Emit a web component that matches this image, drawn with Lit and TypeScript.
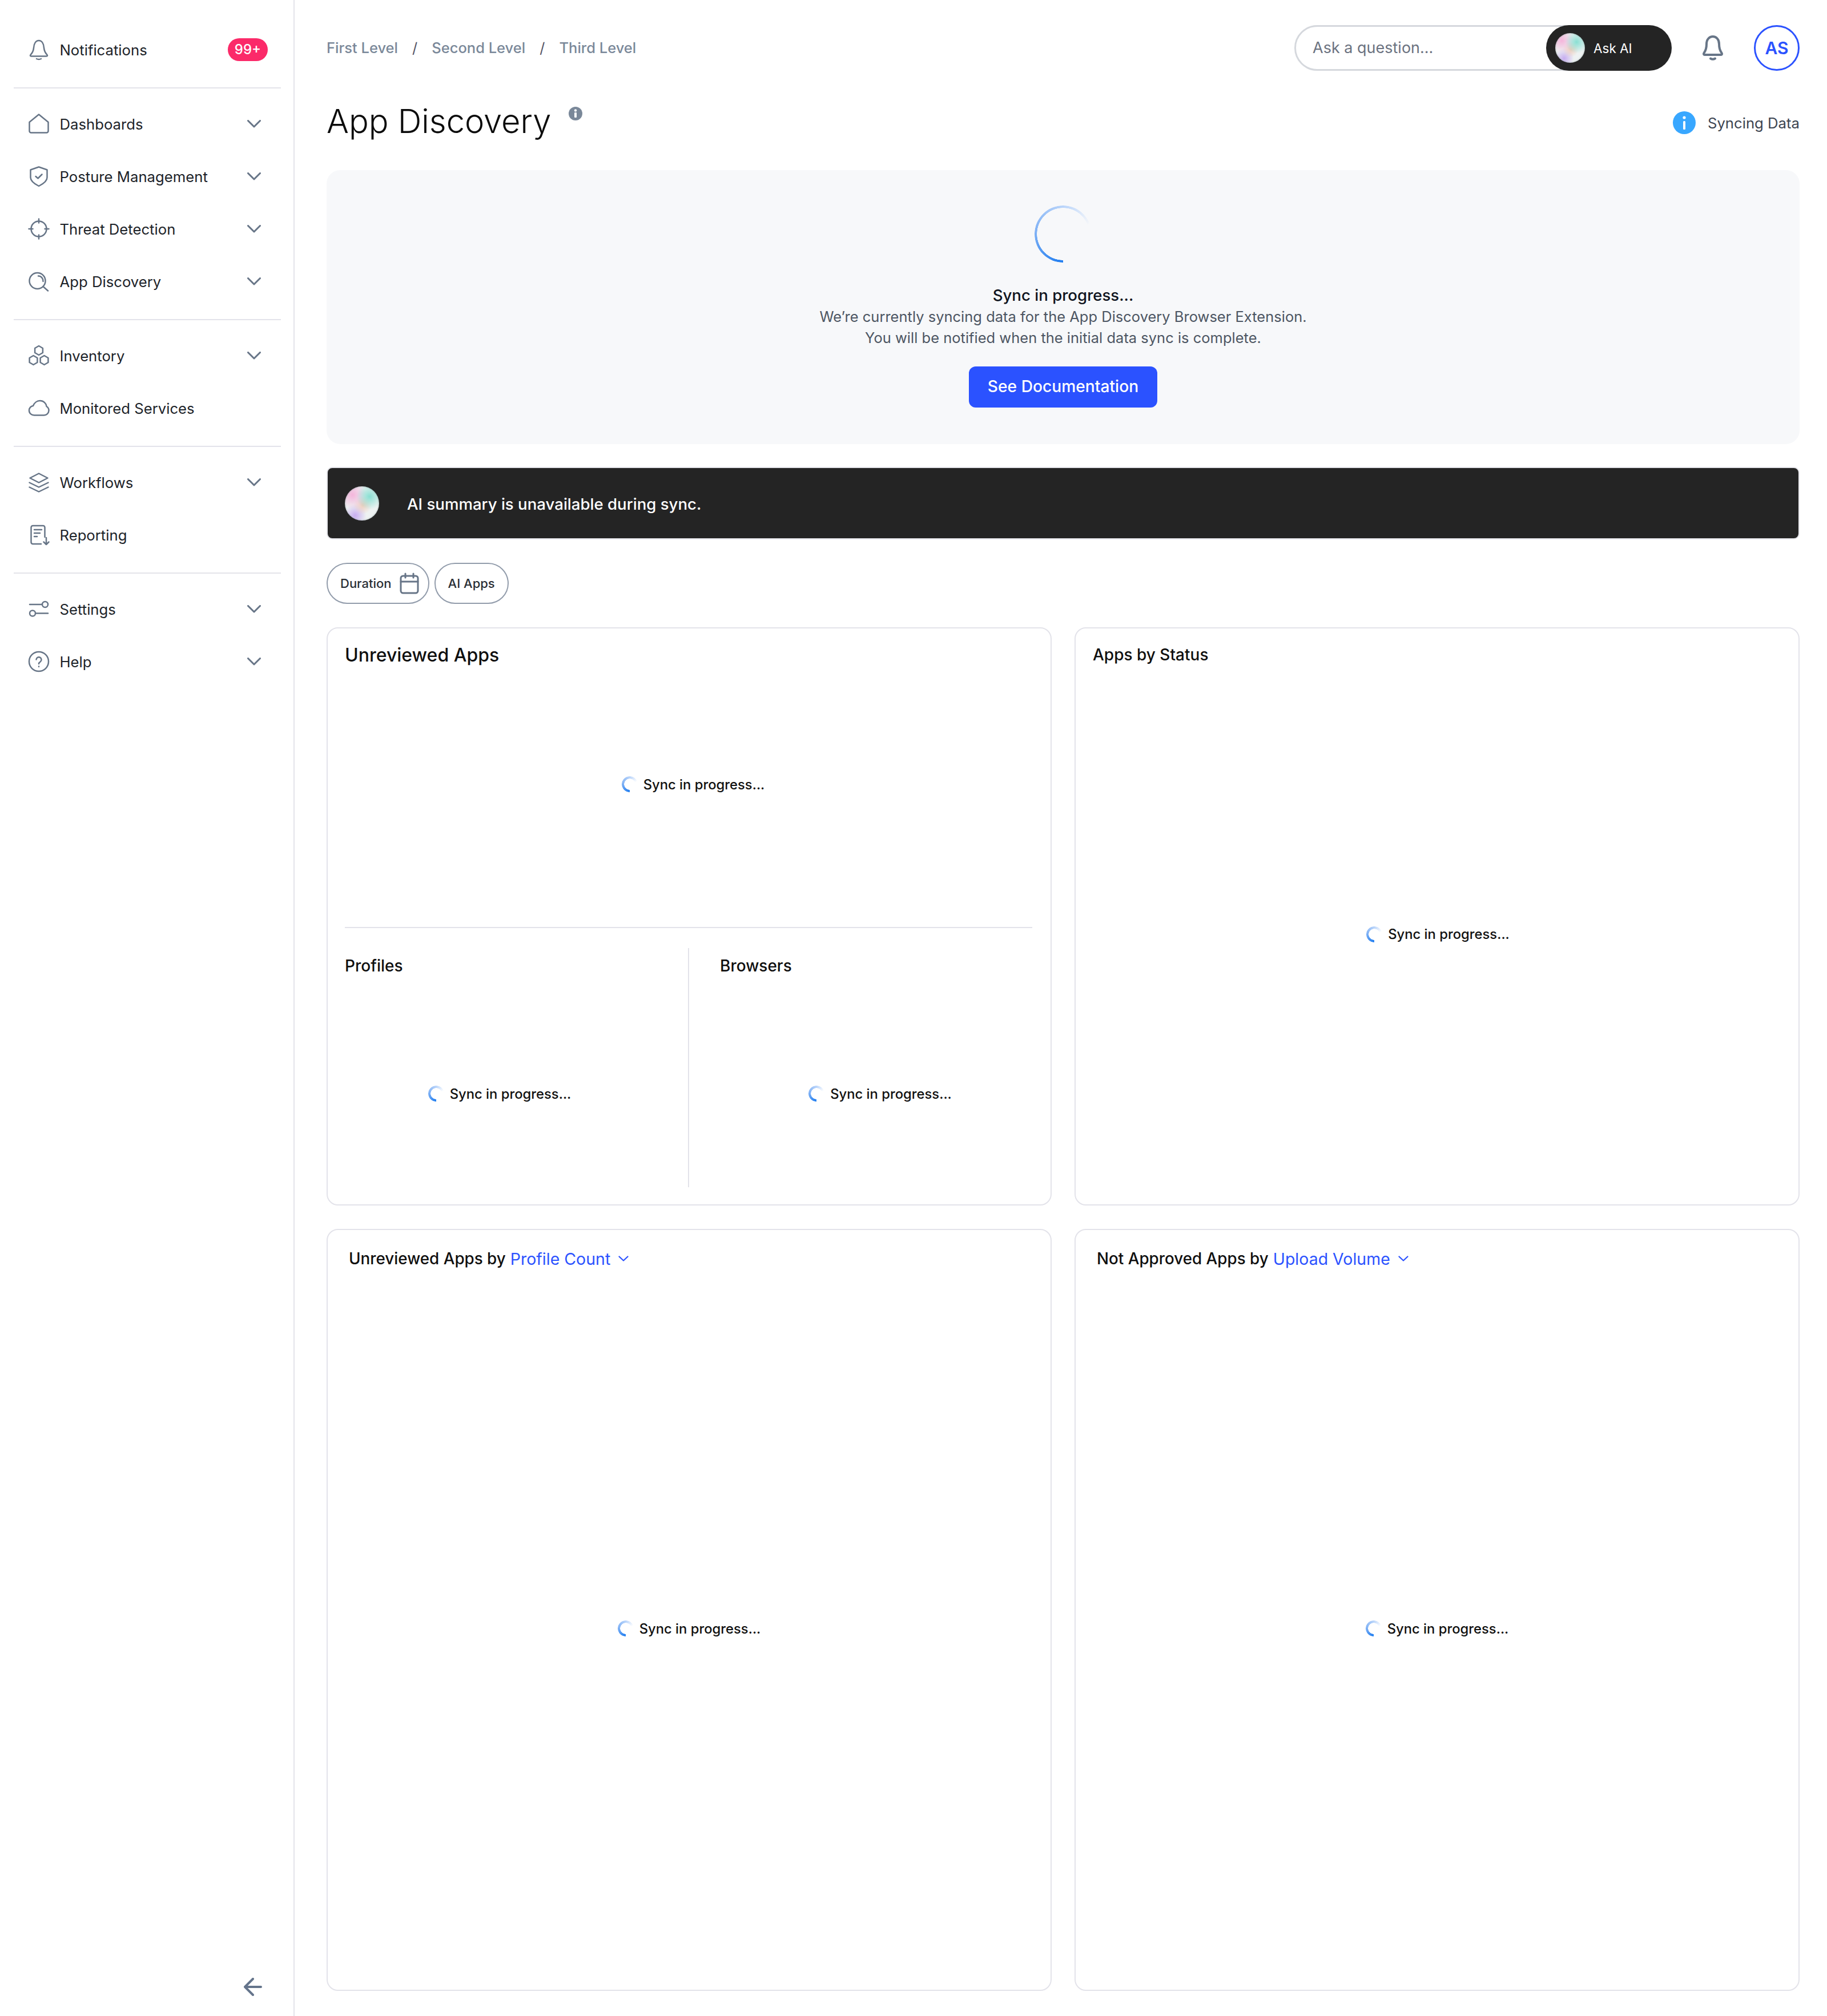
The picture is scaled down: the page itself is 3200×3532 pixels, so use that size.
import { LitElement, html, css, svg } from "lit";
import { customElement } from "lit/decorators.js";

const hex = (cx: number, cy: number, r: number) => {
  const pts = [0, 1, 2, 3, 4, 5]
    .map((i) => {
      const a = (Math.PI / 3) * i - Math.PI / 2;
      return `${(cx + r * Math.cos(a)).toFixed(1)},${(cy + r * Math.sin(a)).toFixed(1)}`;
    })
    .join(" ");
  return svg`<polygon points=${pts}></polygon>`;
};

const icons: Record<string, unknown> = {
  bell: svg`<path d="M3 28C3 26.500 8 24.500 9 15C9.500 7 13 2 18 2C23 2 26.500 7 27 15C28 24.500 33 26.500 33 28C33 29 32 29.500 31 29.500H5C4 29.500 3 29 3 28Z"></path><path d="M14 34Q18 36 22 34"></path>`,
  home: svg`<path d="M1.500 15L18 1.500L34.500 15V30.500A3 3 0 0 1 31.500 33.500H4.500A3 3 0 0 1 1.500 30.500Z"></path>`,
  shield: svg`<path d="M18 1.500L32.500 6.500V20C32.500 26 26 31 18 35C10 31 3.500 26 3.500 20V6.500Z"></path><path d="M12.500 18L16.500 21.500L23.500 14.500"></path>`,
  target: svg`<circle cx="18" cy="18" r="13.500"></circle><path d="M18 0.500V7.500M18 28.500V35.500M0.500 18H7.500M28.500 18H35.500"></path>`,
  search: svg`<circle cx="15.500" cy="17" r="14"></circle><path d="M25.500 27L34 34.500"></path><path d="M17 8.500C22 8.500 25.500 12.500 25.500 18"></path>`,
  inventory: svg`${hex(18, 9, 8)}${hex(8.5, 26, 8)}${hex(27.5, 26, 8)}`,
  cloud: svg`<path d="M10 30.500C5 30.500 1 27 1 22C1 18 4 14.500 8 14C10 9 14.500 5 20 5C26.500 5 31 10 31.500 15C34 16.500 35.500 19 35.500 22C35.500 27 31.500 30.500 27 30.500Z"></path>`,
  layers: svg`<path d="M18 2.500L33.500 10.500L18 18.500L2.500 10.500Z"></path><path d="M1.500 18.500L18 26.500L34.500 18.500"></path><path d="M1.500 26.500L18 34.500L34.500 26.500"></path>`,
  report: svg`<path d="M28.500 22V5A3 3 0 0 0 25.500 2H7.500A3 3 0 0 0 4.500 5V31A3 3 0 0 0 7.500 34H22"></path><path d="M10 9H23M10 15H20M10 21H15"></path><path d="M31 23V35M26.500 30.500L31 35L35.500 30.500"></path>`,
  settings: svg`<path d="M2 10H24"></path><circle cx="29" cy="10" r="5"></circle><circle cx="7" cy="25.500" r="5"></circle><path d="M12.500 25.500H34"></path>`,
  help: svg`<circle cx="18" cy="18" r="17"></circle><path d="M13.500 14.500A4.500 4.500 0 1 1 20.500 18.500C18.800 19.500 18 20.500 18 22"></path><path d="M18 26.500V27"></path>`,
};

const spinner = (big = false) =>
  html`<span class="spin ${big ? "big" : ""}"></span>`;

const loader = html`<div class="loader">${spinner()}<span>Sync in progress...</span></div>`;

const chevron = html`<svg class="chev" viewBox="0 0 24 14"><path d="M1.500 1.500L12 12L22.500 1.500"></path></svg>`;

@customElement("nav-row")
class NavRow extends LitElement {
  static properties = { icon: {}, label: {}, expandable: { type: Boolean } };
  icon = "";
  label = "";
  expandable = false;
  static styles = css`
    :host { display: flex; align-items: center; height: 92px; padding: 0 57px 0 50px; box-sizing: border-box; }
    .ico { width: 36px; height: 36px; flex: none; fill: none; stroke: #677587; stroke-width: 2.500; stroke-linejoin: round; stroke-linecap: round; overflow: visible; }
    .label { margin-left: 18.500px; flex: 1; font: 400 25.700px Inter, sans-serif; color: #1d2329; white-space: nowrap; }
    .chev { width: 24px; height: 14px; fill: none; stroke: #677587; stroke-width: 3; stroke-linecap: round; stroke-linejoin: round; }
    ::slotted(*) { margin-right: -12px; }
  `;
  render() {
    return html`<svg class="ico" viewBox="0 0 36 36">${icons[this.icon]}</svg>
      <span class="label">${this.label}</span><slot></slot>
      ${this.expandable ? chevron : ""}`;
  }
}

@customElement("app-root")
export class AppRoot extends LitElement {
  static styles = css`
    :host { display: block; width: 3200px; font-family: Inter, sans-serif; color: #111; }
    * { box-sizing: border-box; }
    .page { display: flex; min-height: 3532px; }
    .side { width: 516px; flex: none; border-right: 2px solid #e3e3ea; display: flex; flex-direction: column; padding-top: 41px; }
    .rule { height: 2px; background: #e3e3ea; margin: 20px 22px 16px 24px; }
    .badge { width: 70px; height: 40px; border-radius: 20px; background: #fb2a69; color: #fff; font: 500 24px/40px Inter, sans-serif; text-align: center; }
    .back { margin: auto 55px 36px auto; width: 32px; height: 32px; fill: none; stroke: #64748b; stroke-width: 4; stroke-linecap: round; stroke-linejoin: round; }
    main { flex: 1; min-width: 0; padding: 44px 48px 45px 56px; }
    .top { display: flex; align-items: center; height: 80px; }
    .crumbs { display: flex; align-items: center; font: 500 25.500px Inter, sans-serif; color: #7a8899; flex: 1; margin-top: -2px; }
    .crumbs i { font-style: normal; font-weight: 400; margin: 0 25px; color: #556; }
    .ask { position: relative; width: 661px; height: 80px; border: 3px solid #d5d8dd; border-radius: 40px; display: flex; align-items: center; padding: 0 0 2px 29px; font-size: 27px; color: #6b7280; }
    .askbtn { position: absolute; left: 438px; top: -3px; width: 220px; height: 80px; border-radius: 40px; background: #242424; display: flex; align-items: center; padding-left: 16px; gap: 15px; color: #fff; font-size: 22.500px; }
    .orb { flex: none; border-radius: 50%; background:
      radial-gradient(circle at 72% 30%, rgba(120,220,205,.85) 0, rgba(120,220,205,0) 38%),
      radial-gradient(circle at 22% 25%, rgba(245,170,215,.85) 0, rgba(245,170,215,0) 38%),
      radial-gradient(circle at 52% 55%, rgba(240,195,175,.8) 0, rgba(240,195,175,0) 35%),
      radial-gradient(circle at 30% 85%, rgba(195,165,240,.9) 0, rgba(195,165,240,0) 30%),
      #eef2f2; box-shadow: inset 0 0 3px rgba(90,120,120,.6); }
    .o52 { width: 52px; height: 52px; }
    .o60 { width: 60px; height: 60px; }
    .tbell { width: 38px; height: 44px; margin-left: 53px; fill: none; stroke: #677587; stroke-width: 4; stroke-linejoin: round; stroke-linecap: round; }
    .av { width: 80px; height: 80px; margin-left: 53px; border-radius: 50%; border: 3px solid #2b52ff; color: #2b52ff; font: 600 30px/74px Inter, sans-serif; text-align: center; }
    .titlerow { display: flex; align-items: center; height: 126px; margin: 28px 0 20px; }
    .tgroup { flex: 1; display: flex; align-items: flex-start; }
    h1 { margin: -6px 0 0; font: 300 57.800px/80px Inter, sans-serif; color: #0b0b0b; }
    .tinfo { width: 24px; height: 24px; margin: 9px 0 0 31px; }
    .sync { display: flex; align-items: center; gap: 21px; font-size: 25.700px; color: #3c4450; }
    .sync svg { width: 40px; height: 40px; }
    .banner { height: 480px; background: #f7f8fa; border-radius: 24px; padding-top: 62px; display: flex; flex-direction: column; align-items: center; text-align: center; }
    .spin { display: block; flex: none; position: relative; width: 28px; height: 28px; border-radius: 50%;
      background: conic-gradient(from 180deg, #1f7df0 0deg, #7fb1f5 95deg, #b9d4fa 180deg, rgba(225,235,250,0) 250deg);
      -webkit-mask: radial-gradient(closest-side, transparent calc(100% - 4.500px), #000 calc(100% - 4px));
      mask: radial-gradient(closest-side, transparent calc(100% - 4.500px), #000 calc(100% - 4px)); }
    .spin.big { width: 100px; height: 100px; }
    .banner h2 { margin: 39px 0 0; font: 500 27.600px/36px Inter, sans-serif; color: #0f1420; }
    .banner p { margin: 1px 0 0; font: 400 25.500px/37px Inter, sans-serif; color: #4d5663; }
    .btn { margin-top: 32px; width: 330px; height: 72px; border-radius: 12px; background: #2b52ff; color: #fff; font: 500 28.200px/70px Inter, sans-serif; }
    .ai { margin-top: 40px; height: 127px; background: #242424; border: 2px solid #e5e5ea; border-radius: 10px; display: flex; align-items: center; padding: 2px 0 0 30px; gap: 49px; color: #fff; font: 500 27.600px Inter, sans-serif; }
    .ai .orb { margin-top: -2px; }
    .filters { margin-top: 41px; display: flex; gap: 9px; }
    .pill { height: 72px; border: 2.500px solid #929cab; border-radius: 36px; display: flex; align-items: center; padding: 0 22px; gap: 14px; font: 500 22px Inter, sans-serif; color: #2b2f36; }
    .pill.d { padding-right: 16px; }
    .pill svg { width: 34px; height: 38px; fill: none; stroke: #677587; stroke-width: 3; stroke-linecap: round; }
    .grid { margin-top: 41px; display: grid; grid-template-columns: 1270px 1270px; grid-template-rows: 1013px 1335px; gap: 41px 40px; }
    .card { border: 2px solid #e3e3ea; border-radius: 20px; display: flex; flex-direction: column; min-height: 0; }
    .h { font: 500 28px Inter, sans-serif; color: #0f0f0f; white-space: nowrap; }
    .h1 { font-size: 32px; height: 93px; line-height: 93px; padding-left: 30px; }
    .hs { height: 93px; line-height: 93px; padding-left: 30px; }
    .hb { height: 100px; display: flex; align-items: center; padding-left: 37px; gap: 8px; font-size: 27.800px; }
    .hb b { font-weight: 400; font-size: 28.500px; color: #2b52ff; }
    .hb svg { width: 18px; height: 10px; margin-left: 6px; fill: none; stroke: #2b52ff; stroke-width: 2.200; stroke-linecap: round; stroke-linejoin: round; }
    .upper { height: 360px; padding-left: 14px; }
    .fill { flex: 1; display: flex; align-items: center; justify-content: center; }
    .upper.fill { flex: none; }
    .rulec { height: 2px; background: #e3e3ea; margin: 70px 32px 0 30px; }
    .cols { flex: 1; display: flex; margin: 35px 32px 30px 30px; min-height: 0; }
    .col { display: flex; flex-direction: column; }
    .col.l { flex: none; width: 603px; border-right: 2px solid #e3e3ea; padding-right: 59px; }
    .col.r { flex: 1; padding-left: 54px; }
    .col .h { height: 62px; line-height: 62px; }
    .col .fill { padding-top: 29px; }
    .col.r .fill { padding-left: 14px; }
    .pb31 { padding: 0 0 31px 3px; }
    .pb35 { padding-bottom: 35px; }
    .loader { display: flex; align-items: center; gap: 10px; font: 500 23.800px Inter, sans-serif; color: #111; white-space: nowrap; }
  `;

  render() {
    return html`<div class="page">
      <aside class="side">
        <nav-row icon="bell" label="Notifications"><span class="badge">99+</span></nav-row>
        <div class="rule"></div>
        <nav-row icon="home" label="Dashboards" expandable></nav-row>
        <nav-row icon="shield" label="Posture Management" expandable></nav-row>
        <nav-row icon="target" label="Threat Detection" expandable></nav-row>
        <nav-row icon="search" label="App Discovery" expandable></nav-row>
        <div class="rule"></div>
        <nav-row icon="inventory" label="Inventory" expandable></nav-row>
        <nav-row icon="cloud" label="Monitored Services"></nav-row>
        <div class="rule"></div>
        <nav-row icon="layers" label="Workflows" expandable></nav-row>
        <nav-row icon="report" label="Reporting"></nav-row>
        <div class="rule"></div>
        <nav-row icon="settings" label="Settings" expandable></nav-row>
        <nav-row icon="help" label="Help" expandable></nav-row>
        <svg class="back" viewBox="0 0 32 32"><path d="M30 16H2M16 2L2 16L16 30"></path></svg>
      </aside>
      <main>
        <div class="top">
          <div class="crumbs"><span>First Level</span><i>/</i><span>Second Level</span><i>/</i><span>Third Level</span></div>
          <div class="ask">Ask a question...
            <div class="askbtn"><span class="orb o52"></span>Ask AI</div>
          </div>
          <svg class="tbell" viewBox="0 0 38 44"><path d="M3 32C3 30 8 28 8 15C8 7 13 2 19 2C25 2 30 7 30 15C30 28 35 30 35 32C35 33.500 34 34 33 34H5C4 34 3 33.500 3 32Z"></path><path d="M15 40.500Q19 43 23 40.500"></path></svg>
          <div class="av">AS</div>
        </div>
        <div class="titlerow">
          <div class="tgroup">
            <h1>App Discovery</h1>
            <svg class="tinfo" viewBox="0 0 24 24"><circle cx="12" cy="12" r="12" fill="#7a8899"></circle><circle cx="12" cy="6.500" r="2.200" fill="#fff"></circle><rect x="10" y="10" width="4" height="9" rx="1" fill="#fff"></rect></svg>
          </div>
          <div class="sync">
            <svg viewBox="0 0 40 40"><circle cx="20" cy="20" r="20" fill="#38a7ff"></circle><circle cx="20" cy="11" r="2.600" fill="#fff"></circle><rect x="18" y="17" width="4" height="15" rx="1.500" fill="#fff"></rect></svg>
            Syncing Data
          </div>
        </div>
        <section class="banner">
          ${spinner(true)}
          <h2>Sync in progress...</h2>
          <p>We’re currently syncing data for the App Discovery Browser Extension.<br />You will be notified when the initial data sync is complete.</p>
          <div class="btn">See Documentation</div>
        </section>
        <section class="ai"><span class="orb o60"></span>AI summary is unavailable during sync.</section>
        <div class="filters">
          <div class="pill d">Duration
            <svg viewBox="0 0 34 38"><rect x="2" y="6" width="30" height="30" rx="4"></rect><path d="M2 16H32M10 2V9M24 2V9"></path></svg>
          </div>
          <div class="pill">AI Apps</div>
        </div>
        <div class="grid">
          <div class="card">
            <div class="h h1">Unreviewed Apps</div>
            <div class="upper fill">${loader}</div>
            <div class="rulec"></div>
            <div class="cols">
              <div class="col l"><div class="h">Profiles</div><div class="fill">${loader}</div></div>
              <div class="col r"><div class="h">Browsers</div><div class="fill">${loader}</div></div>
            </div>
          </div>
          <div class="card">
            <div class="h hs">Apps by Status</div>
            <div class="fill pb31">${loader}</div>
          </div>
          <div class="card">
            <div class="h hb">Unreviewed Apps by <b>Profile Count</b><svg viewBox="0 0 18 10"><path d="M1.500 1.500L9 8.500L16.500 1.500"></path></svg></div>
            <div class="fill pb35">${loader}</div>
          </div>
          <div class="card">
            <div class="h hb">Not Approved Apps by <b>Upload Volume</b><svg viewBox="0 0 18 10"><path d="M1.500 1.500L9 8.500L16.500 1.500"></path></svg></div>
            <div class="fill pb35">${loader}</div>
          </div>
        </div>
      </main>
    </div>`;
  }
}
void NavRow;
